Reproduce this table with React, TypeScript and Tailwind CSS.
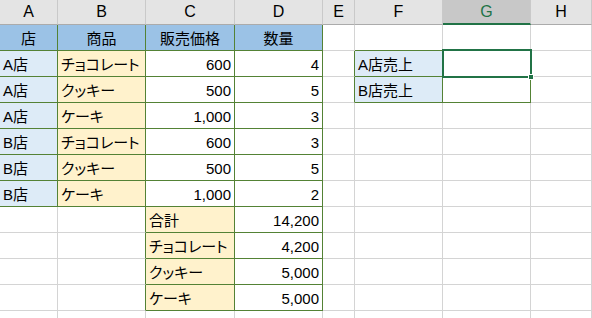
import React from 'react';

type Cell = {
  text?: string;
  bg?: string;
  align?: 'left' | 'right' | 'center';
  framed?: boolean;
};

const COLS = ['A', 'B', 'C', 'D', 'E', 'F', 'G', 'H'];
const ROW_COUNT = 12;

const blue = 'bg-[#9bc2e6]';
const paleBlue = 'bg-[#ddebf7]';
const paleYellow = 'bg-[#fff2cc]';

// sheet contents, keyed by "col,row" (0-based)
const cells: Record<string, Cell> = {};
const put = (c: number, r: number, cell: Cell) => {
  cells[`${c},${r}`] = { framed: true, ...cell };
};

['店', '商品', '販売価格', '数量'].forEach((t, c) => put(c, 0, { text: t, bg: blue, align: 'center' }));

const sales: [string, string, string, string][] = [
  ['A店', 'チョコレート', '600', '4'],
  ['A店', 'クッキー', '500', '5'],
  ['A店', 'ケーキ', '1,000', '3'],
  ['B店', 'チョコレート', '600', '3'],
  ['B店', 'クッキー', '500', '5'],
  ['B店', 'ケーキ', '1,000', '2'],
];
sales.forEach(([shop, item, price, qty], i) => {
  const r = i + 1;
  put(0, r, { text: shop, bg: paleBlue });
  put(1, r, { text: item, bg: paleYellow });
  put(2, r, { text: price, align: 'right' });
  put(3, r, { text: qty, align: 'right' });
});

const totals: [string, string][] = [
  ['合計', '14,200'],
  ['チョコレート', '4,200'],
  ['クッキー', '5,000'],
  ['ケーキ', '5,000'],
];
totals.forEach(([label, value], i) => {
  put(2, 7 + i, { text: label, bg: paleYellow });
  put(3, 7 + i, { text: value, align: 'right' });
});

put(5, 1, { text: 'A店売上', bg: paleBlue });
put(5, 2, { text: 'B店売上', bg: paleBlue });
put(6, 1, {});
put(6, 2, {});

const isFramed = (c: number, r: number) => !!cells[`${c},${r}`]?.framed;

function SheetCell({ c, r }: { c: number; r: number }) {
  const cell = cells[`${c},${r}`] ?? {};
  const rightGreen = isFramed(c, r) || isFramed(c + 1, r);
  const bottomGreen = isFramed(c, r) || isFramed(c, r + 1);
  const selected = c === 6 && r === 1;
  return (
    <div
      className={[
        'relative flex h-[26px] items-center overflow-visible whitespace-nowrap border-b border-r px-[3px] pt-[2px] text-[15px] leading-[20px] text-black',
        selected ? 'z-10' : '',
        rightGreen ? 'border-r-[#548235]' : 'border-r-[#d4d4d4]',
        bottomGreen ? 'border-b-[#548235]' : 'border-b-[#d4d4d4]',
        cell.bg ?? 'bg-white',
        cell.align === 'right' ? 'justify-end' : cell.align === 'center' ? 'justify-center' : 'justify-start',
      ].join(' ')}
    >
      {cell.text}
      {selected && (
        <>
          <div className="pointer-events-none absolute -left-px -top-[2px] bottom-[-2px] right-[-2px] border-2 border-[#217346]" />
          <div className="absolute bottom-[-4px] right-[-4px] h-[6px] w-[6px] border border-white bg-[#217346]" />
        </>
      )}
    </div>
  );
}

export default function App() {
  return (
    <div
      className="h-[318px] w-[592px] overflow-hidden bg-white"
      style={{ fontFamily: '"Liberation Sans", "Noto Sans CJK JP", sans-serif', fontFeatureSettings: '"palt"' }}
    >
      <div className="grid grid-cols-[58px_88px_89px_88px_32px_88px_88px_61px]">
        {COLS.map((name, c) => (
          <div
            key={name}
            className={[
              'flex h-[25px] items-center justify-center border-r border-r-[#c9c9c9] text-[16px]',
              c === 6
                ? 'border-b-2 border-b-[#217346] bg-[#c8c8c8] text-[#217346]'
                : 'border-b border-b-[#ababab] bg-[#e4e4e4] text-black',
            ].join(' ')}
          >
            {name}
          </div>
        ))}
        {Array.from({ length: ROW_COUNT }).map((_, r) =>
          COLS.map((name, c) => <SheetCell key={`${name}${r}`} c={c} r={r} />),
        )}
      </div>
    </div>
  );
}
